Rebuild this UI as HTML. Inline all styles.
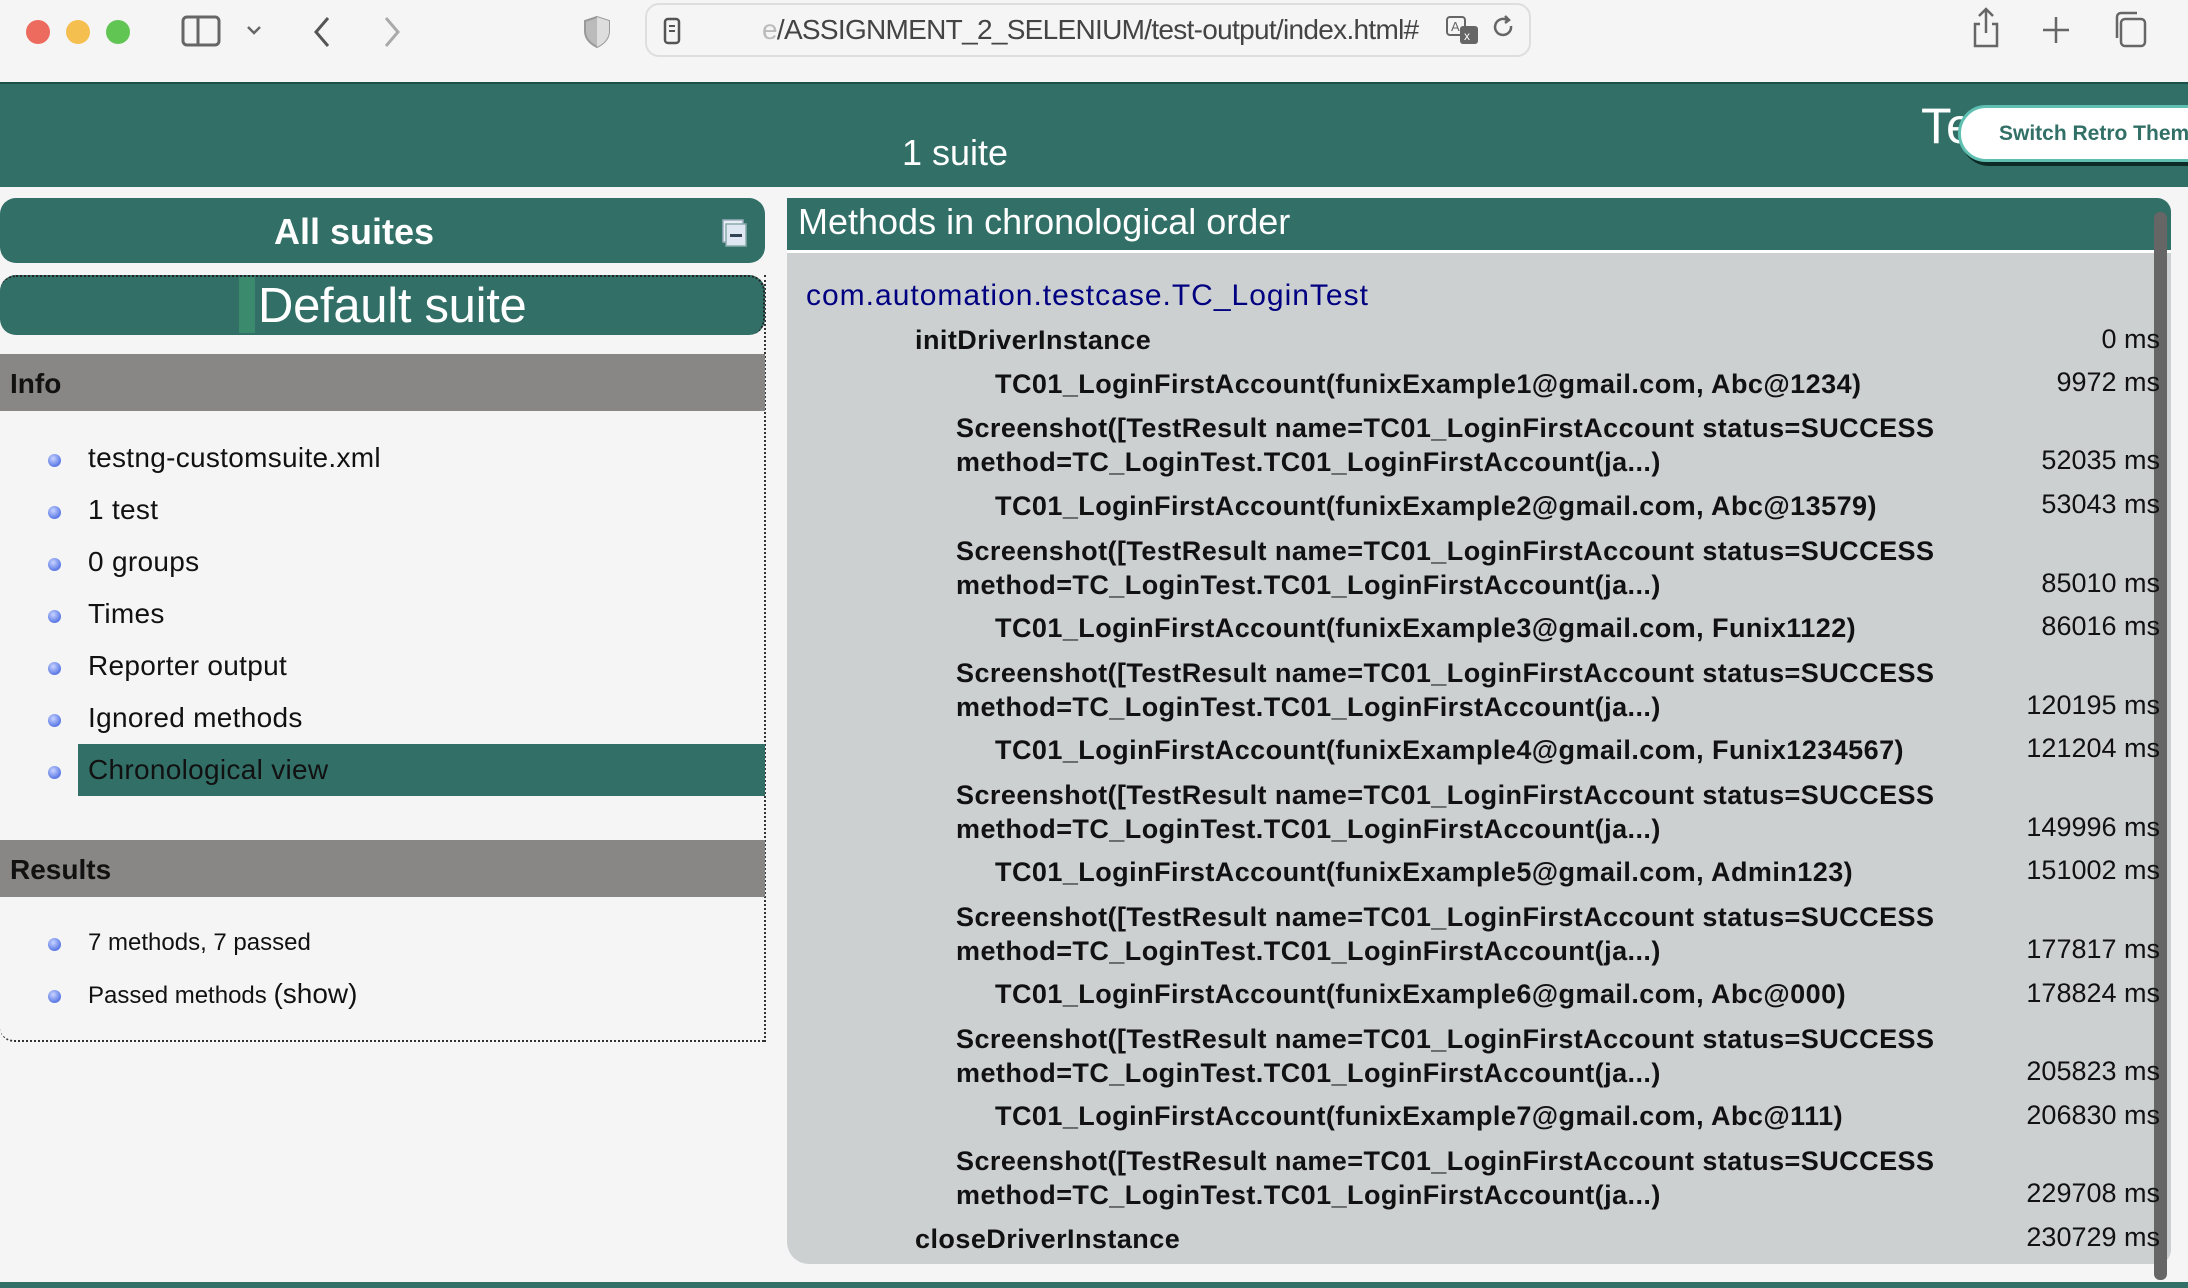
<!DOCTYPE html>
<html><head><meta charset="utf-8"><style>
*{margin:0;padding:0;box-sizing:border-box}
body{width:2188px;height:1288px;overflow:hidden;background:#f5f5f5;font-family:"Liberation Sans",Arial,sans-serif;position:relative}
.a{position:absolute;white-space:nowrap}
.tb{position:absolute;left:0;top:0;width:2188px;height:82px;background:#f5f5f5}
.hdr{position:absolute;left:0;top:82px;width:2188px;height:105px;background:#316f67;border-top:2px solid #1f4f49}
.teal{background:#316f67}
.row{font-weight:bold;font-size:27px;color:#111;line-height:34px;letter-spacing:0.45px}
.tm{font-size:27px;color:#111;line-height:34px;right:28px;text-align:right}
.li{font-size:28px;color:#111;line-height:34px;letter-spacing:0.3px}
.dot{position:absolute;width:13px;height:13px;border-radius:50%;background:radial-gradient(circle at 40% 35%,#c8d4ff,#5a78e6 70%)}
</style></head><body>
<div class="tb">
 <div class="a" style="left:26px;top:20px;width:24px;height:24px;border-radius:50%;background:#ec6a5e"></div>
 <div class="a" style="left:66px;top:20px;width:24px;height:24px;border-radius:50%;background:#f4bf4f"></div>
 <div class="a" style="left:106px;top:20px;width:24px;height:24px;border-radius:50%;background:#61c554"></div>
 <svg class="a" style="left:180px;top:14px" width="44" height="34" viewBox="0 0 44 34"><rect x="3" y="3" width="36" height="28" rx="4" fill="none" stroke="#666" stroke-width="3"/><line x1="18" y1="3" x2="18" y2="31" stroke="#666" stroke-width="3"/></svg>
 <svg class="a" style="left:244px;top:22px" width="20" height="16"><path d="M4 5l6 6 6-6" fill="none" stroke="#666" stroke-width="2.5"/></svg>
 <svg class="a" style="left:310px;top:14px" width="24" height="36"><path d="M18 4L6 18l12 14" fill="none" stroke="#555" stroke-width="3"/></svg>
 <svg class="a" style="left:380px;top:14px" width="24" height="36"><path d="M6 4l12 14L6 32" fill="none" stroke="#aaa" stroke-width="3"/></svg>
 <svg class="a" style="left:582px;top:14px" width="30" height="36"><path d="M15 3L3 7v10c0 8 6 13 12 16 6-3 12-8 12-16V7z" fill="#bbb" stroke="#999" stroke-width="2"/><path d="M15 3v30c6-3 12-8 12-16V7z" fill="#ddd"/></svg>
 <div class="a" style="left:645px;top:3px;width:886px;height:54px;border:2px solid #dedede;border-radius:14px;background:#f5f5f5"></div>
 <svg class="a" style="left:662px;top:16px" width="20" height="30"><rect x="3" y="3" width="14" height="24" rx="3" fill="none" stroke="#555" stroke-width="2.5"/><path d="M7 10h6M7 15h6" stroke="#555" stroke-width="2"/></svg>
 <div class="a" style="left:762px;top:13px;font-size:28px;color:#444;line-height:34px;letter-spacing:-0.7px"><span style="color:#bbb">e</span>/ASSIGNMENT_2_SELENIUM/test-output/index.html#</div>
 <svg class="a" style="left:1444px;top:14px" width="40" height="34"><rect x="3" y="3" width="18" height="18" rx="3" fill="none" stroke="#666" stroke-width="2"/><text x="7" y="17" font-size="13" fill="#666" font-family="Liberation Sans">A</text><rect x="16" y="12" width="18" height="18" rx="3" fill="#666"/><text x="20" y="26" font-size="12" fill="#fff" font-family="Liberation Sans">x</text></svg>
 <svg class="a" style="left:1492px;top:14px" width="24" height="30"><path d="M19 12a8 8 0 1 1-4-6" fill="none" stroke="#666" stroke-width="2.5"/><path d="M13 2l4 4-4 3" fill="none" stroke="#666" stroke-width="2.5"/></svg>
 <svg class="a" style="left:1970px;top:6px" width="32" height="44"><path d="M16 3v24M9 10l7-7 7 7" fill="none" stroke="#666" stroke-width="2.5"/><path d="M10 18H5v22h22V18h-5" fill="none" stroke="#666" stroke-width="2.5"/></svg>
 <svg class="a" style="left:2040px;top:14px" width="32" height="32"><path d="M16 3v26M3 16h26" stroke="#666" stroke-width="2.5"/></svg>
 <svg class="a" style="left:2112px;top:10px" width="36" height="40"><rect x="9" y="9" width="24" height="27" rx="4" fill="#f5f5f5" stroke="#666" stroke-width="2.5"/><path d="M5 28V7a4 4 0 0 1 4-4h16" fill="none" stroke="#666" stroke-width="2.5"/></svg>
</div>
<div class="hdr"></div>
<div class="a" style="left:902px;top:131px;font-size:36px;color:#fff;line-height:44px">1 suite</div>
<div class="a" style="left:1921px;top:97px;font-size:50px;color:#fff;line-height:58px">Te</div>
<div class="a" style="left:1958px;top:105px;width:260px;height:57px;border-radius:28px;background:#fff;border:3px solid #5fbfb0;box-shadow:3px 4px 0 #0e2a26"></div>
<div class="a" style="left:1999px;top:121px;font-size:21px;font-weight:bold;color:#316f67;line-height:26px">Switch Retro Theme</div>

<div class="a" style="left:0;top:275px;width:766px;height:767px;border:2px dotted #333;border-left:none;border-top:none;border-bottom-left-radius:14px"></div>
<div class="a teal" style="left:0;top:198px;width:765px;height:65px;border-radius:16px"></div>
<div class="a" style="left:274px;top:210px;font-size:36px;font-weight:bold;color:#fff;line-height:44px">All suites</div>
<svg class="a" style="left:720px;top:217px" width="28" height="30"><rect x="3" y="3" width="20" height="22" fill="#e8eef5" stroke="#9ab" stroke-width="1.5"/><rect x="6" y="7" width="20" height="22" fill="#dfe8f2" stroke="#8aa" stroke-width="1.5"/><rect x="10" y="17" width="12" height="3" fill="#345"/></svg>
<div class="a teal" style="left:0;top:275px;width:765px;height:60px;border-radius:16px;border-top:2px dotted #222;border-right:2px dotted #222"></div>
<div class="a" style="left:239px;top:277px;width:16px;height:56px;background:#3c8a6e"></div>
<div class="a" style="left:258px;top:277px;font-size:49px;color:#fff;line-height:58px;letter-spacing:-0.3px">Default suite</div>
<div class="a" style="left:0;top:354px;width:765px;height:57px;background:#888785"></div>
<div class="a" style="left:10px;top:367px;font-size:28px;font-weight:bold;color:#111;line-height:34px">Info</div>
<div class="a" style="left:78px;top:744px;width:687px;height:52px;background:#316f67"></div>
<div class="dot" style="left:48px;top:454px"></div><div class="a li" style="left:88px;top:441px">testng-customsuite.xml</div>
<div class="dot" style="left:48px;top:506px"></div><div class="a li" style="left:88px;top:493px">1 test</div>
<div class="dot" style="left:48px;top:558px"></div><div class="a li" style="left:88px;top:545px">0 groups</div>
<div class="dot" style="left:48px;top:610px"></div><div class="a li" style="left:88px;top:597px">Times</div>
<div class="dot" style="left:48px;top:662px"></div><div class="a li" style="left:88px;top:649px">Reporter output</div>
<div class="dot" style="left:48px;top:714px"></div><div class="a li" style="left:88px;top:701px">Ignored methods</div>
<div class="dot" style="left:48px;top:766px"></div><div class="a li" style="left:88px;top:753px">Chronological view</div>
<div class="a" style="left:0;top:840px;width:765px;height:57px;background:#888785"></div>
<div class="a" style="left:10px;top:853px;font-size:28px;font-weight:bold;color:#111;line-height:34px">Results</div>
<div class="dot" style="left:48px;top:938px"></div><div class="a" style="left:88px;top:928px;font-size:24px;color:#111;line-height:30px">7 methods, 7 passed</div>
<div class="dot" style="left:48px;top:990px"></div><div class="a" style="left:88px;top:978px;font-size:24px;color:#111;line-height:32px">Passed methods <span style="font-size:28px">(show)</span></div>

<div class="a" style="left:787px;top:198px;width:1384px;height:1066px;background:#cdd0d1;border-radius:0 14px 14px 22px"></div>
<div class="a teal" style="left:787px;top:198px;width:1384px;height:55px;border-radius:0 14px 0 0;border-bottom:3px solid #fff"></div>
<div class="a" style="left:798px;top:200px;font-size:36px;color:#fff;line-height:44px">Methods in chronological order</div>
<div class="a" style="left:2154px;top:212px;width:13px;height:1068px;background:#666;border-radius:6px"></div>
<div class="a" style="left:806px;top:278px;font-size:30px;color:#000080;line-height:36px;letter-spacing:1px">com.automation.testcase.TC_LoginTest</div>

<div class="a row" style="left:915px;top:323px">initDriverInstance</div><div class="a tm" style="top:322px">0 ms</div>
<div class="a row" style="left:995px;top:367px">TC01_LoginFirstAccount(funixExample1@gmail.com, Abc@1234)</div><div class="a tm" style="top:365px">9972 ms</div>
<div class="a row" style="left:956px;top:411px">Screenshot([TestResult name=TC01_LoginFirstAccount status=SUCCESS<br>method=TC_LoginTest.TC01_LoginFirstAccount(ja...)</div><div class="a tm" style="top:443px">52035 ms</div>
<div class="a row" style="left:995px;top:489px">TC01_LoginFirstAccount(funixExample2@gmail.com, Abc@13579)</div><div class="a tm" style="top:487px">53043 ms</div>
<div class="a row" style="left:956px;top:534px">Screenshot([TestResult name=TC01_LoginFirstAccount status=SUCCESS<br>method=TC_LoginTest.TC01_LoginFirstAccount(ja...)</div><div class="a tm" style="top:566px">85010 ms</div>
<div class="a row" style="left:995px;top:611px">TC01_LoginFirstAccount(funixExample3@gmail.com, Funix1122)</div><div class="a tm" style="top:609px">86016 ms</div>
<div class="a row" style="left:956px;top:656px">Screenshot([TestResult name=TC01_LoginFirstAccount status=SUCCESS<br>method=TC_LoginTest.TC01_LoginFirstAccount(ja...)</div><div class="a tm" style="top:688px">120195 ms</div>
<div class="a row" style="left:995px;top:733px">TC01_LoginFirstAccount(funixExample4@gmail.com, Funix1234567)</div><div class="a tm" style="top:731px">121204 ms</div>
<div class="a row" style="left:956px;top:778px">Screenshot([TestResult name=TC01_LoginFirstAccount status=SUCCESS<br>method=TC_LoginTest.TC01_LoginFirstAccount(ja...)</div><div class="a tm" style="top:810px">149996 ms</div>
<div class="a row" style="left:995px;top:855px">TC01_LoginFirstAccount(funixExample5@gmail.com, Admin123)</div><div class="a tm" style="top:853px">151002 ms</div>
<div class="a row" style="left:956px;top:900px">Screenshot([TestResult name=TC01_LoginFirstAccount status=SUCCESS<br>method=TC_LoginTest.TC01_LoginFirstAccount(ja...)</div><div class="a tm" style="top:932px">177817 ms</div>
<div class="a row" style="left:995px;top:977px">TC01_LoginFirstAccount(funixExample6@gmail.com, Abc@000)</div><div class="a tm" style="top:976px">178824 ms</div>
<div class="a row" style="left:956px;top:1022px">Screenshot([TestResult name=TC01_LoginFirstAccount status=SUCCESS<br>method=TC_LoginTest.TC01_LoginFirstAccount(ja...)</div><div class="a tm" style="top:1054px">205823 ms</div>
<div class="a row" style="left:995px;top:1099px">TC01_LoginFirstAccount(funixExample7@gmail.com, Abc@111)</div><div class="a tm" style="top:1098px">206830 ms</div>
<div class="a row" style="left:956px;top:1144px">Screenshot([TestResult name=TC01_LoginFirstAccount status=SUCCESS<br>method=TC_LoginTest.TC01_LoginFirstAccount(ja...)</div><div class="a tm" style="top:1176px">229708 ms</div>
<div class="a row" style="left:915px;top:1222px">closeDriverInstance</div><div class="a tm" style="top:1220px">230729 ms</div>

<div class="a" style="left:0;top:1282px;width:2188px;height:6px;background:#316f67"></div>
</body></html>
